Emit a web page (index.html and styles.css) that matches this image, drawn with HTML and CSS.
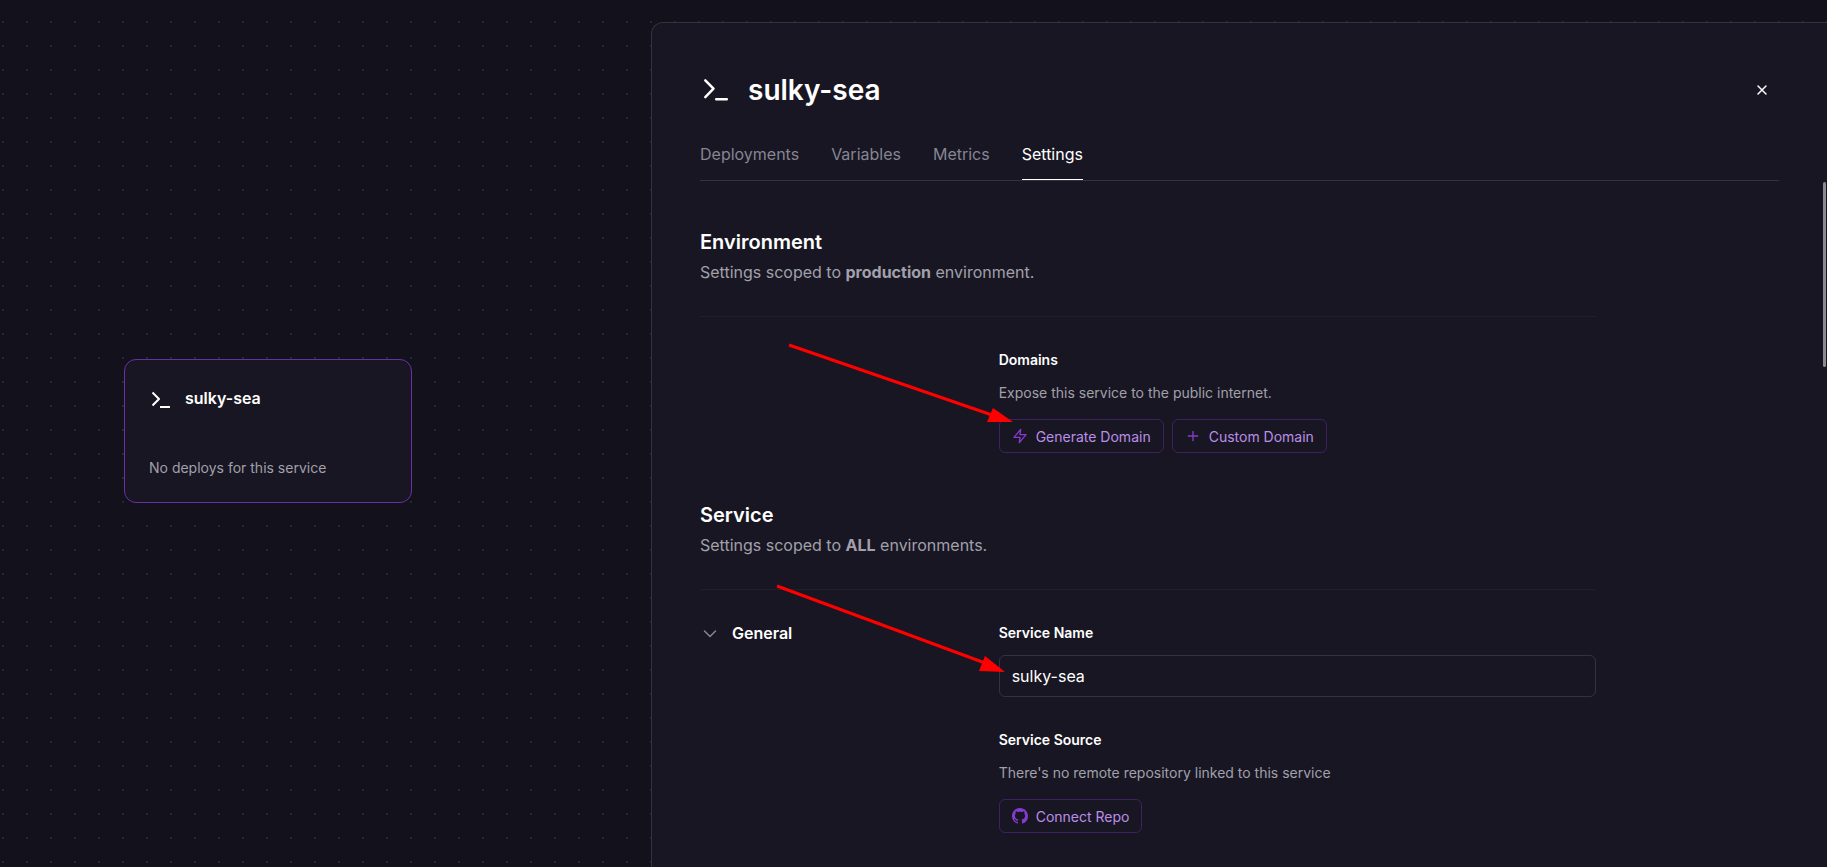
FILE: index.html
```html
<!DOCTYPE html>
<html lang="en">
<head>
<meta charset="utf-8">
<title>sulky-sea · Settings</title>
<link rel="stylesheet" href="styles.css">
</head>
<body>
<div class="workspace">
  <section class="canvas" aria-label="Project canvas">
    <article class="node">
      <header class="node-head">
        <svg class="node-icon" viewBox="0 0 24 24" fill="none" stroke="currentColor" stroke-width="2" stroke-linejoin="round" aria-hidden="true"><path d="M3.500 6.500l6.500 6.500-6.500 6.500M11 21h10"/></svg>
        <h2 class="node-title">sulky-sea</h2>
      </header>
      <p class="node-status">No deploys for this service</p>
    </article>
  </section>

  <main class="panel">
    <header class="panel-head">
      <svg class="panel-icon" viewBox="0 0 32 32" fill="none" stroke="currentColor" stroke-width="2.500" stroke-linecap="round" stroke-linejoin="round" aria-hidden="true"><path d="M5.300 6.300l8.200 8.400-8.200 8.400M16.200 25.300h10.600"/></svg>
      <h1 class="panel-title">sulky-sea</h1>
      <button class="close" type="button" aria-label="Close">
        <svg class="close-icon" viewBox="0 0 16 16" fill="none" stroke="currentColor" stroke-width="1.500" stroke-linecap="round" aria-hidden="true"><path d="M3 4l8 8M11 4l-8 8"/></svg>
      </button>
    </header>

    <nav class="tabs">
      <a class="tab" href="#deployments">Deployments</a>
      <a class="tab" href="#variables">Variables</a>
      <a class="tab" href="#metrics">Metrics</a>
      <a class="tab tab-active" href="#settings" aria-current="page">Settings</a>
    </nav>

    <div class="settings">
      <section class="group">
        <h2 class="group-title">Environment</h2>
        <p class="group-text">Settings scoped to <strong>production</strong> environment.</p>
        <div class="row">
          <div class="row-body">
            <div class="field">
              <h3 class="label">Domains</h3>
              <p class="hint">Expose this service to the public internet.</p>
              <div class="actions">
                <button class="btn" type="button">
                  <svg class="btn-icon" viewBox="0 0 24 24" fill="none" stroke="currentColor" stroke-width="2" stroke-linecap="round" stroke-linejoin="round" aria-hidden="true"><path d="M13 2L3 14h9l-1 8 10-12h-9l1-8z"/></svg>
                  <span class="btn-text">Generate Domain</span>
                </button>
                <button class="btn" type="button">
                  <svg class="btn-icon" viewBox="0 0 24 24" fill="none" stroke="currentColor" stroke-width="2" stroke-linecap="round" aria-hidden="true"><path d="M12 5v14M5 12h14"/></svg>
                  <span class="btn-text">Custom Domain</span>
                </button>
              </div>
            </div>
          </div>
        </div>
      </section>

      <section class="group">
        <h2 class="group-title">Service</h2>
        <p class="group-text">Settings scoped to <strong>ALL</strong> environments.</p>
        <div class="row">
          <button class="toggle" type="button" aria-expanded="true">
            <svg class="toggle-icon" viewBox="0 0 20 20" fill="none" stroke="currentColor" stroke-width="1.500" stroke-linecap="round" stroke-linejoin="round" aria-hidden="true"><path d="M4.500 8l5.500 5.500 5.500-5.500"/></svg>
            General
          </button>
          <div class="row-body">
            <div class="field">
              <label class="label" for="service-name">Service Name</label>
              <input class="input" id="service-name" type="text" value="sulky-sea">
            </div>
            <div class="field">
              <h3 class="label">Service Source</h3>
              <p class="hint">There's no remote repository linked to this service</p>
              <div class="actions">
                <button class="btn" type="button">
                  <svg class="btn-icon" viewBox="0 0 16 16" fill="currentColor" aria-hidden="true"><path d="M8 0C3.580 0 0 3.580 0 8c0 3.540 2.290 6.530 5.470 7.590.4.070.55-.17.55-.38 0-.19-.010-.82-.010-1.490-2.010.37-2.530-.49-2.690-.94-.090-.23-.48-.94-.82-1.130-.28-.15-.68-.52-.010-.53.63-.010 1.080.58 1.230.82.72 1.210 1.870.87 2.330.66.070-.52.28-.87.51-1.070-1.780-.2-3.640-.89-3.640-3.950 0-.87.31-1.590.82-2.150-.080-.2-.36-1.020.080-2.120 0 0 .67-.21 2.200.82.64-.18 1.320-.27 2-.27s1.360.090 2 .27c1.530-1.040 2.200-.82 2.200-.82.44 1.100.16 1.920.080 2.120.51.56.82 1.270.82 2.150 0 3.070-1.870 3.750-3.650 3.950.29.25.54.73.54 1.480 0 1.070-.010 1.930-.010 2.200 0 .21.15.46.55.38A8.010 8.010 0 0016 8c0-4.420-3.580-8-8-8z"/></svg>
                  <span class="btn-text">Connect Repo</span>
                </button>
              </div>
            </div>
          </div>
        </div>
      </section>
    </div>

    <div class="scroll-thumb"></div>
    <svg class="arrows" viewBox="0 0 400 360" aria-hidden="true">
      <g stroke="#ff0000" stroke-width="3"><path d="M137 23L340 93M125 264L333 341"/></g>
      <g fill="#ff0000"><path d="M361 100L341 86L335 100zM353 350L333 334L327 349z"/></g>
    </svg>
  </main>
</div>
</body>
</html>
```
FILE: styles.css
```css
* { box-sizing: border-box; }

body {
  margin: 0;
  background: #13111c;
  color: #ffffff;
  font-family: Inter, "Liberation Sans", sans-serif;
  font-size: 16px;
  line-height: 24px;
}

h1, h2, h3, p { margin: 0; }

button, input { font: inherit; color: inherit; }

.workspace {
  display: grid;
  grid-template-columns: 651fr 1176fr;
  height: 100vh;
  padding-top: 22px;
  overflow: hidden;
  background: radial-gradient(circle at 3px 22px, #282632 1px, transparent 1px) 0 0 / 24px 24px;
}

.canvas { position: relative; }

.node {
  position: absolute;
  left: 124px;
  top: 337px;
  width: 288px;
  height: 144px;
  padding: 24px;
  display: flex;
  flex-direction: column;
  justify-content: space-between;
  border: 1px solid #6b2fa5;
  border-radius: 12px;
  background: #181622;
}

.node-head { display: flex; align-items: center; gap: 12px; padding-top: 2px; }
.node-icon { width: 24px; height: 24px; }
.node-title { font-size: 16px; line-height: 24px; font-weight: 600; }
.node-status { font-size: 14px; line-height: 20px; color: #a1a0ab; }

.panel {
  position: relative;
  padding: 48px 48px 0;
  border: 1px solid #33323e;
  border-width: 1px 0 0 1px;
  border-top-left-radius: 12px;
  background: #181622;
}

.panel-head { display: flex; align-items: center; gap: 16px; height: 38px; }
.panel-icon { width: 32px; height: 32px; }
.panel-title { font-size: 28px; line-height: 36px; font-weight: 600; }

.close {
  display: flex;
  margin-left: auto;
  padding: 8px;
  border: 0;
  background: none;
}
.close-icon { width: 16px; height: 16px; }

.tabs {
  display: flex;
  gap: 32px;
  margin-top: 33px;
  border-bottom: 1px solid #33323e;
}
.tab {
  padding-bottom: 13px;
  border-bottom: 1px solid transparent;
  color: #868593;
  text-decoration: none;
}
.tab-active { color: #ffffff; border-bottom-color: #ffffff; }

.settings {
  display: flex;
  flex-direction: column;
  gap: 48px;
  max-width: 896px;
  padding-top: 47px;
}

.group-title { font-size: 20px; line-height: 28px; font-weight: 600; }
.group-text { margin-top: 4px; color: #a1a0ab; }
.group-text strong { font-weight: 700; }

.row {
  display: grid;
  grid-template-columns: 1fr 2fr;
  margin-top: 32px;
  padding-top: 31px;
  border-top: 1px solid #211f2d;
}
.row-body {
  grid-column: 2;
  display: flex;
  flex-direction: column;
  gap: 31px;
}

.field { display: flex; flex-direction: column; }
.label { font-size: 14px; line-height: 24px; font-weight: 600; }
.hint { margin-top: 11px; font-size: 14px; line-height: 20px; color: #a1a0ab; }
.actions { display: flex; gap: 8px; margin-top: 16px; }

.btn {
  display: flex;
  align-items: center;
  gap: 8px;
  height: 34px;
  padding: 0 12px;
  border: 1px solid #3d2160;
  border-radius: 6px;
  background: none;
  font-size: 14px;
  line-height: 20px;
  color: #bb8ee8;
}
.btn-icon { width: 16px; height: 16px; color: #853bce; }
.btn-text { padding-top: 2px; }

.toggle {
  display: flex;
  align-items: center;
  align-self: start;
  gap: 12px;
  padding: 0;
  border: 0;
  background: none;
  font-weight: 600;
}
.toggle-icon { width: 20px; height: 20px; color: #868593; }

.input {
  width: 100%;
  height: 42px;
  margin-top: 10px;
  padding: 0 12px;
  border: 1px solid #33323e;
  border-radius: 6px;
  background: none;
}

.scroll-thumb {
  position: absolute;
  top: 159px;
  right: 1px;
  width: 3px;
  height: 185px;
  border-radius: 2px;
  background: #8b8a8c;
}

.arrows {
  position: absolute;
  left: 0;
  top: 299px;
  width: 400px;
  height: 360px;
}
```
